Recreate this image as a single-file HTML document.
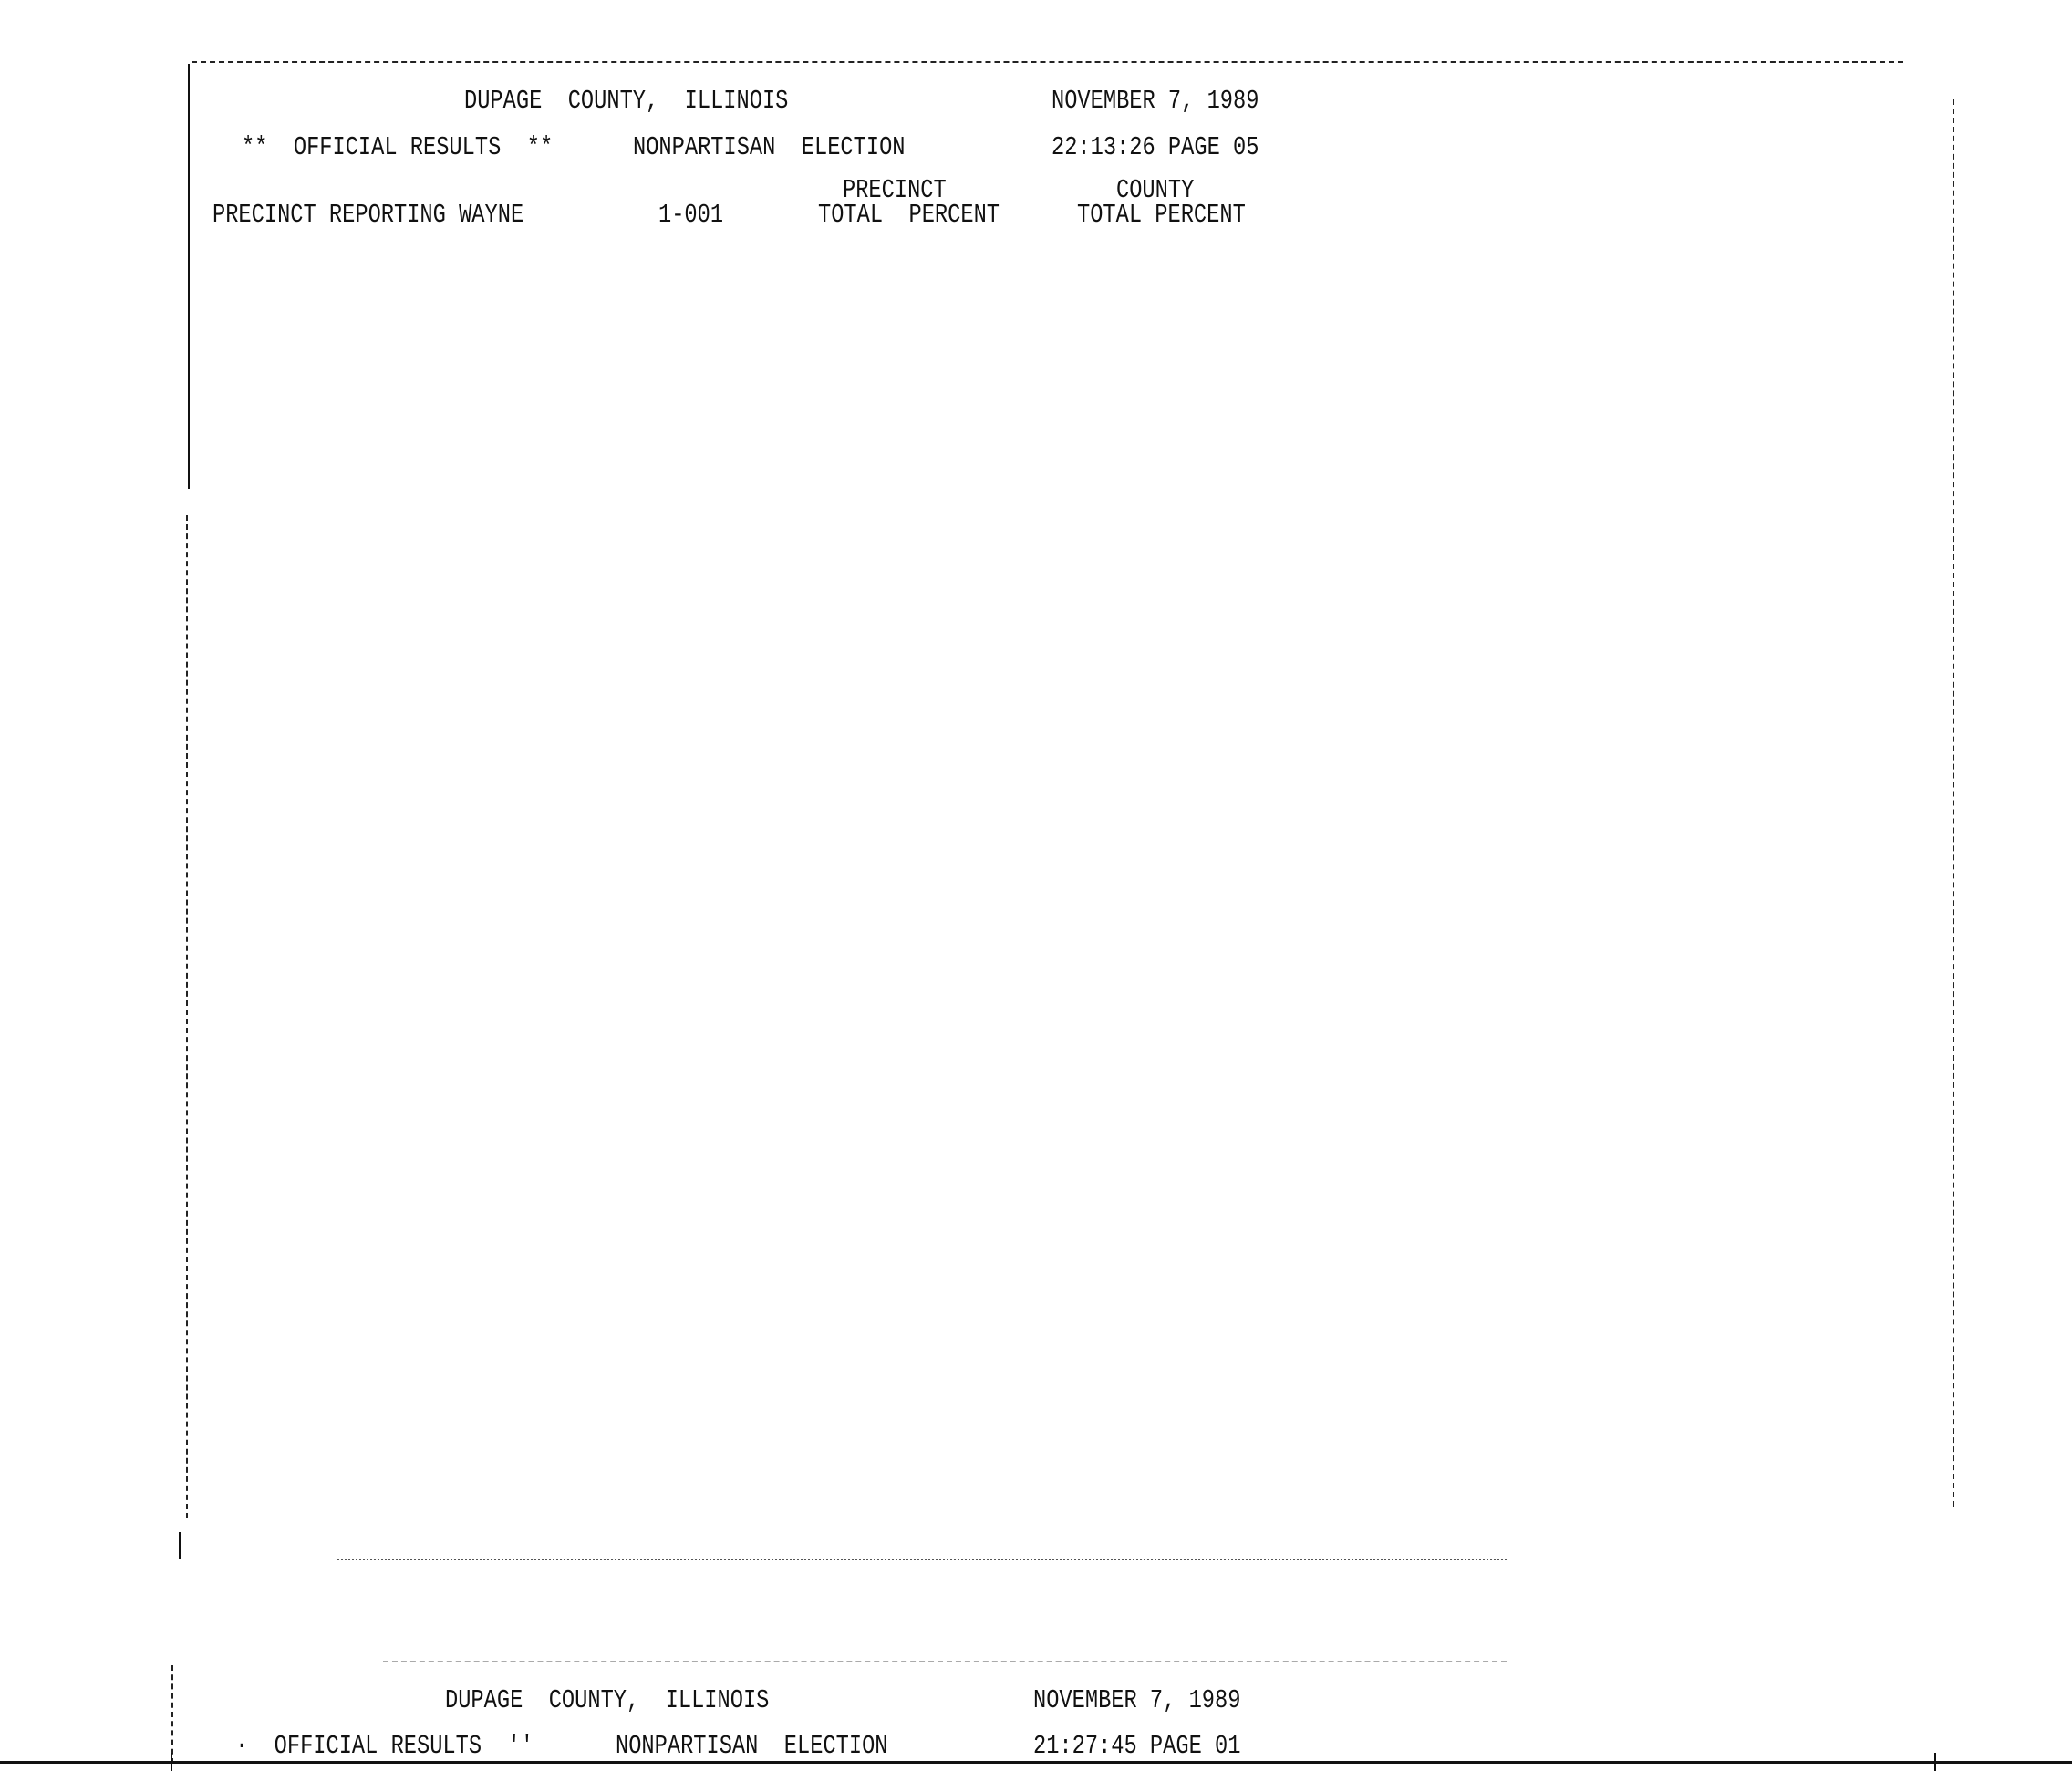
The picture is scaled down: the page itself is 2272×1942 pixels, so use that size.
<!DOCTYPE html>
<html><head><meta charset="utf-8"><style>
html,body{margin:0;padding:0;background:#fff}
body{width:2272px;height:1942px;position:relative;overflow:hidden}
.t{position:absolute;font-family:"Liberation Mono",monospace;font-size:23.7px;line-height:24px;color:#111;white-space:pre;transform:scaleY(1.2);transform-origin:left center}
.l{position:absolute;background:#111}
</style></head><body>
<div class="l" style="left:210px;top:67px;width:1877px;height:0;border-top:2px dashed #222;background:none"></div>
<div class="l" style="left:206px;top:70px;width:2px;height:466px"></div>
<div class="l" style="left:204px;top:565px;width:0;height:1100px;border-left:2px dashed #222;background:none"></div>
<div class="l" style="left:196px;top:1680px;width:2px;height:30px"></div>
<div class="l" style="left:2141px;top:109px;width:0;height:1543px;border-left:2px dashed #222;background:none"></div>
<div class="l" style="left:370px;top:1709px;width:1282px;height:0;border-top:2px dotted #555;background:none"></div>
<div class="l" style="left:420px;top:1821px;width:1232px;height:0;border-top:2px dashed #aaa;background:none"></div>
<div class="l" style="left:188px;top:1826px;width:0;height:108px;border-left:2px dashed #222;background:none"></div>
<div class="l" style="left:0;top:1931px;width:2272px;height:3px"></div>
<div class="l" style="left:2121px;top:1922px;width:2px;height:20px"></div>
<div class="l" style="left:187px;top:1922px;width:2px;height:20px"></div>

<div class="t" style="left:509px;top:100px">DUPAGE  COUNTY,  ILLINOIS</div>
<div class="t" style="left:1153px;top:100px">NOVEMBER 7, 1989</div>
<div class="t" style="left:265px;top:151px">**  OFFICIAL RESULTS  **</div>
<div class="t" style="left:694px;top:151px">NONPARTISAN  ELECTION</div>
<div class="t" style="left:1153px;top:151px">22:13:26 PAGE 05</div>
<div class="t" style="left:924px;top:198px">PRECINCT</div>
<div class="t" style="left:1224px;top:198px">COUNTY</div>
<div class="t" style="left:233px;top:225px">PRECINCT REPORTING WAYNE</div>
<div class="t" style="left:722px;top:225px">1-001</div>
<div class="t" style="left:897px;top:225px">TOTAL  PERCENT</div>
<div class="t" style="left:1181px;top:225px">TOTAL PERCENT</div>

<div class="t" style="left:488px;top:1854px">DUPAGE  COUNTY,  ILLINOIS</div>
<div class="t" style="left:1133px;top:1854px">NOVEMBER 7, 1989</div>
<div class="t" style="left:258px;top:1904px">·  OFFICIAL RESULTS  ''</div>
<div class="t" style="left:675px;top:1904px">NONPARTISAN  ELECTION</div>
<div class="t" style="left:1133px;top:1904px">21:27:45 PAGE 01</div>
</body></html>
